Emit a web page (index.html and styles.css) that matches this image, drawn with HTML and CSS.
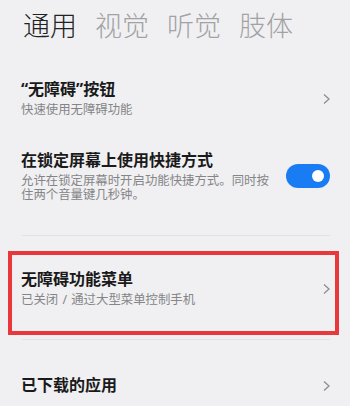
FILE: index.html
```html
<!DOCTYPE html>
<html lang="zh-CN">
  <head>
    <meta charset="utf-8">
    <title>无障碍</title>
    <link rel="stylesheet" href="styles.css">
  </head>
  <body>

  <div class="tabs">
    <span class="tab active">通用</span>
    <span class="tab">视觉</span>
    <span class="tab">听觉</span>
    <span class="tab">肢体</span>
  </div>

  <div class="list">
    <div class="item">
      <div class="text">
        <div class="title">“无障碍”按钮</div>
        <div class="sub">快速使用无障碍功能</div>
      </div>
      <svg class="chev" width="7" height="10" viewBox="0 0 7 10"><path d="M1 0.6 L6 5 L1 9.4" /></svg>
    </div>

    <div class="item">
      <div class="text">
        <div class="title">在锁定屏幕上使用快捷方式</div>
        <div class="sub">允许在锁定屏幕时开启功能快捷方式。同时按住两个音量键几秒钟。</div>
      </div>
      <span class="switch on"><span class="knob"></span></span>
    </div>

    <div class="divider"></div>

    <div class="marked">
      <div class="item">
        <div class="text">
          <div class="title">无障碍功能菜单</div>
          <div class="sub">已关闭 / 通过大型菜单控制手机</div>
        </div>
        <svg class="chev" width="7" height="10" viewBox="0 0 7 10"><path d="M1 0.6 L6 5 L1 9.4" /></svg>
      </div>
    </div>

    <div class="divider tight"></div>

    <div class="item last">
      <div class="text">
        <div class="title">已下载的应用</div>
      </div>
      <svg class="chev" width="7" height="10" viewBox="0 0 7 10"><path d="M1 0.6 L6 5 L1 9.4" /></svg>
    </div>
  </div>

  </body>
</html>
```

FILE: styles.css
```css
html {
  height: 100%;
}
body {
  margin: 0;
  padding: 0;
  background: #f0f0f2;
  color: #1a1a1a;
  font-family: "Noto Sans", "Noto Sans CJK SC", sans-serif;
  height: 100%;
  overflow: hidden;
}

.tabs {
  display: flex;
  gap: 18px;
  padding: 10px 0 0 23px;
  height: 32px;
}

.tab {
  font-size: 27px;
  line-height: 32px;
  font-weight: 300;
  color: #a2a2a4;
}

.tab.active {
  color: #222222;
}

.list {
  margin-top: 20px;
}

.item {
  display: flex;
  align-items: center;
  gap: 12px;
  padding: 16px 20px 16px 21px;
}

.text {
  flex: 1;
  min-width: 0;
}

.title {
  font-size: 16px;
  line-height: 22px;
  font-weight: bold;
  color: #1a1a1a;
}

.sub {
  margin-top: 3px;
  font-size: 12.4px;
  line-height: 14px;
  color: #858587;
  word-spacing: 1px;
}

.chev {
  flex: none;
  display: block;
  margin-top: 2px;
}

.chev path {
  fill: none;
  stroke: #8e8e90;
  stroke-width: 1.3;
}

.switch {
  flex: none;
  display: flex;
  align-items: center;
  justify-content: flex-end;
  width: 44px;
  height: 24px;
  border-radius: 12px;
  background: #c8c8ca;
  box-sizing: border-box;
  padding-right: 6px;
}

.switch.on {
  background: #1a7cf2;
}

.knob {
  width: 12px;
  height: 12px;
  border-radius: 50%;
  background: #ffffff;
}

.divider {
  height: 1px;
  background: #e2e2e4;
  margin: 17px 20px 0 22px;
}

.divider.tight {
  margin-top: 4px;
}

.marked {
  margin: 15px 11px 0 8px;
  border: 4px solid #e8383c;
}

.marked .item {
  padding: 13px 5px 24px 9px;
}

.item.last {
  padding-top: 34px;
}
```
